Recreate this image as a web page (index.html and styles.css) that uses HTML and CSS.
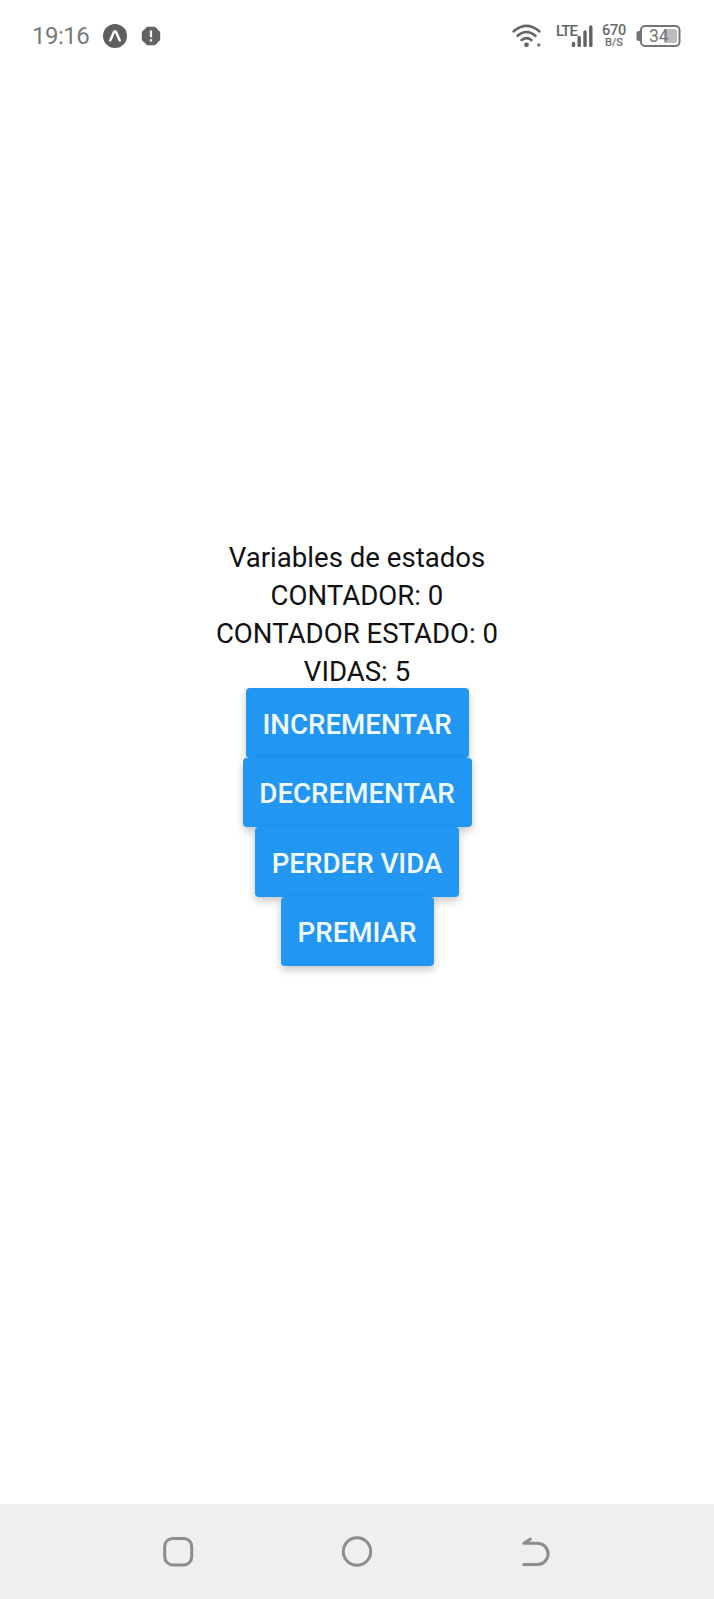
FILE: index.html
```html
<!DOCTYPE html>
<html lang="es">
<head>
<meta charset="utf-8">
<title>Variables de estados</title>
<link rel="stylesheet" href="styles.css">
</head>
<body>
<div class="screen">
  <header class="status">
    <span class="clock">19:16</span>
    <svg class="app-icon" width="24" height="24" viewBox="0 0 24 24"><circle cx="12" cy="12" r="12" fill="#5f5f5f"/><path d="M7.200 16.400 11.200 7.400h1.600l4 9" fill="none" stroke="#fff" stroke-width="2.500" stroke-linecap="round" stroke-linejoin="round"/></svg>
    <svg class="alert-icon" width="20" height="20" viewBox="0 0 20 20"><path d="M6 .8h8L19.200 6v8L14 19.200H6L.8 14V6z" fill="#636363"/><path d="M10 4.500v6.700M10 13.200v2.300" stroke="#fff" stroke-width="2.200"/></svg>
    <svg class="wifi" width="30" height="24" viewBox="0 0 30 24"><g fill="none" stroke="#666" stroke-width="2.600" stroke-linecap="round"><path d="M1.700 7.300Q14.500-3.500 27.300 7.300"/><path d="M5.600 11.800Q14.500 4.200 23.400 11.800"/><path d="M9.600 16.100Q14.500 12.200 19.400 16.100"/></g><circle cx="14.500" cy="20.800" r="2.400" fill="#666"/><circle cx="26.800" cy="21" r="1.700" fill="#777"/></svg>
    <div class="signal">
      <span class="lte">LTE</span>
      <svg class="bars" width="22" height="22" viewBox="0 0 22 22"><path d="M2.500 18.500v2M8.200 12.500v8M14 7v13.500M19.800 2v18.500" stroke="#626262" stroke-width="3.400" stroke-linecap="round"/></svg>
    </div>
    <div class="speed"><span class="rate">670</span><span class="unit">B/S</span></div>
    <div class="battery">
      <svg width="45" height="22" viewBox="0 0 45 22"><rect x="28" y="4" width="13" height="14" rx="2" fill="#bdbdbd"/><rect x="5" y="1" width="38.500" height="20" rx="4" fill="none" stroke="#757575" stroke-width="2"/><path d="M4 6H2.500Q.5 6 .5 8v6q0 2 2 2H4z" fill="#757575"/></svg>
      <span class="level">34</span>
    </div>
  </header>
  <main class="content">
    <p class="line title">Variables de estados</p>
    <p class="line">CONTADOR: 0</p>
    <p class="line">CONTADOR ESTADO: 0</p>
    <p class="line">VIDAS: 5</p>
    <div class="actions">
      <button class="btn increment">INCREMENTAR</button>
      <button class="btn decrement">DECREMENTAR</button>
      <button class="btn lose">PERDER VIDA</button>
      <button class="btn reward">PREMIAR</button>
    </div>
  </main>
  <nav class="nav">
    <svg width="32" height="32" viewBox="0 0 32 32"><rect x="2.700" y="2.400" width="27" height="26.500" rx="8" /></svg>
    <svg width="32" height="32" viewBox="0 0 32 32"><circle cx="16" cy="15.500" r="13.700"/></svg>
    <svg width="32" height="32" viewBox="0 0 32 32"><path d="M10.500 3 3.800 7.200H17.500a10.600 10.600 0 0 1 0 21.300H3.800"/></svg>
  </nav>
</div>
</body>
</html>
```
FILE: styles.css
```css
* { box-sizing: border-box; }
body { margin: 0; background: #fff; font-family: Roboto, sans-serif; }
.screen { display: flex; flex-direction: column; width: 714px; height: 1599px; }
.status { display: flex; height: 72px; padding-left: 32px; align-items: center; color: #7a7a7a; }
.clock { width: 71px; font-size: 24px; line-height: 28px; letter-spacing: -0.5px; }
.alert-icon { margin-left: 14px; }
.wifi { margin-left: 351px; }
.signal { position: relative; width: 38px; height: 24px; margin-left: 14px; }
.lte { position: absolute; left: 0; top: 0; font-size: 15px; line-height: 15px; font-weight: 500; color: #626262; letter-spacing: -0.9px; }
.bars { position: absolute; left: 15px; top: 1px; }
.speed { display: flex; flex-direction: column; align-items: center; width: 26px; margin-left: 7px; padding-top: 1px; color: #6a6a6a; font-weight: 500; }
.rate { font-size: 14.500px; line-height: 13px; letter-spacing: -0.3px; }
.unit { font-size: 11px; line-height: 12px; }
.battery { position: relative; width: 45px; height: 22px; margin-left: 9px; }
.battery svg { display: block; }
.level { position: absolute; left: 13px; top: 2px; font-size: 17.500px; line-height: 18px; color: #757575; }
.content { display: flex; flex: 1; flex-direction: column; align-items: center; padding-top: 467.400px; }
.line { margin: 0; font-size: 27.600px; line-height: 37.800px; color: #111; white-space: nowrap; }
.actions { display: flex; flex-direction: column; align-items: center; margin-top: -2.500px; }
.btn { height: 69.500px; flex: none; padding: 3.500px 0 0; border: 0; border-radius: 4px; background: #2196f3; color: #f2fcff; font: 500 27.700px/66px Roboto, sans-serif; white-space: nowrap; box-shadow: 0 4px 8px rgba(0, 0, 0, .22); }
.increment { width: 223px; }
.decrement { width: 229px; }
.lose { width: 204px; }
.reward { width: 153px; }
.nav { display: flex; height: 95px; padding: 32px 162px 0; justify-content: space-between; background: #efefef; }
.nav svg { fill: none; stroke: #8d8d8d; stroke-width: 3; stroke-linecap: round; stroke-linejoin: round; }
```
